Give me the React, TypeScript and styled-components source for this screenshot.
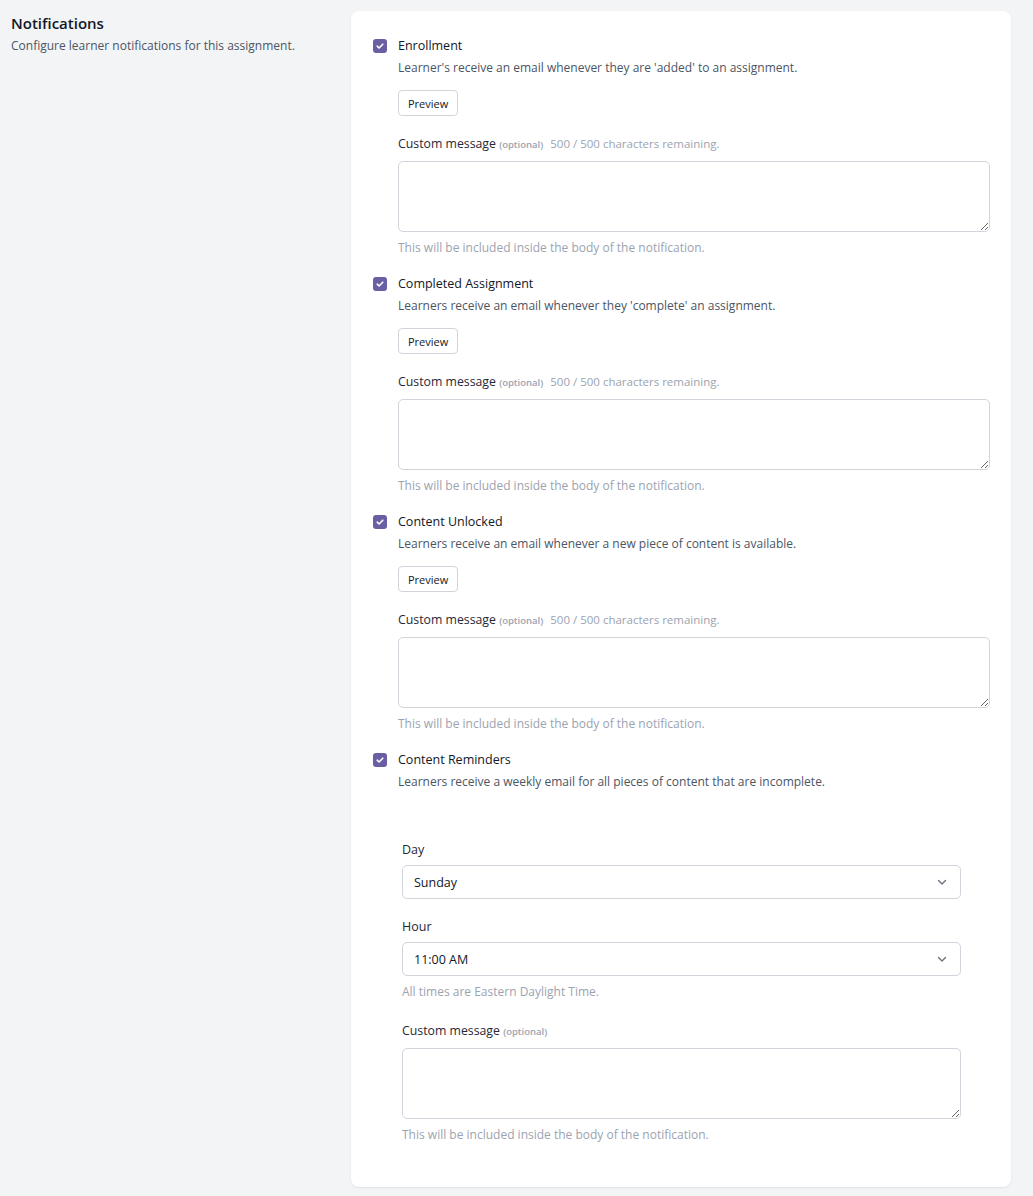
import styled, { createGlobalStyle } from 'styled-components';

const GlobalStyle = createGlobalStyle`
  body {
    margin: 0;
    background: #f3f4f6;
    font-family: "Open Sans", "Noto Sans", sans-serif;
    color: #1f2937;
  }
`;

const notifications = [
  {
    title: 'Enrollment',
    text: "Learner's receive an email whenever they are 'added' to an assignment.",
  },
  {
    title: 'Completed Assignment',
    text: "Learners receive an email whenever they 'complete' an assignment.",
  },
  {
    title: 'Content Unlocked',
    text: 'Learners receive an email whenever a new piece of content is available.',
  },
];

const Check = () => (
  <Box>
    <svg width="10" height="10" viewBox="0 0 10 10">
      <path d="M2.2 5.2 L4.1 7 L7.8 3.2" fill="none" stroke="#fff" strokeWidth="1.6" strokeLinecap="round" strokeLinejoin="round" />
    </svg>
  </Box>
);

const Chevron = () => (
  <svg width="12" height="12" viewBox="0 0 12 12">
    <path d="M2.5 4.5 L6 8 L9.5 4.5" fill="none" stroke="#6b7280" strokeWidth="1.4" strokeLinecap="round" strokeLinejoin="round" />
  </svg>
);

const App = () => {
  return (
    <>
      <GlobalStyle />
      <Page>
        <Intro>
          <Heading>Notifications</Heading>
          <Lead>Configure learner notifications for this assignment.</Lead>
        </Intro>
        <Card>
          {notifications.map((n) => (
            <Item key={n.title}>
              <Check />
              <Body>
                <Title>{n.title}</Title>
                <Desc>{n.text}</Desc>
                <PreviewButton>Preview</PreviewButton>
                <LabelRow>
                  <Label>
                    Custom message <Optional>(optional)</Optional>
                  </Label>
                  <Counter>500 / 500 characters remaining.</Counter>
                </LabelRow>
                <TextArea />
                <Hint>This will be included inside the body of the notification.</Hint>
              </Body>
            </Item>
          ))}
          <Item>
            <Check />
            <Body>
              <Title>Content Reminders</Title>
              <Desc>Learners receive a weekly email for all pieces of content that are incomplete.</Desc>
            </Body>
          </Item>
          <Schedule>
            <Field $top={0}>
              <FieldLabel>Day</FieldLabel>
              <Select>
                <span>Sunday</span>
                <Chevron />
              </Select>
            </Field>
            <Field $top={20}>
              <FieldLabel>Hour</FieldLabel>
              <Select>
                <span>11:00 AM</span>
                <Chevron />
              </Select>
              <Hint>All times are Eastern Daylight Time.</Hint>
            </Field>
            <Field $top={23}>
              <Label>
                Custom message <Optional>(optional)</Optional>
              </Label>
              <TextArea />
              <Hint>This will be included inside the body of the notification.</Hint>
            </Field>
          </Schedule>
        </Card>
      </Page>
    </>
  );
};

const Page = styled.div`
  display: grid;
  grid-template-columns: 340px 660px;
  padding: 11px 0 8px 11px;
`;

const Intro = styled.div`
  padding-top: 2px;
`;

const Heading = styled.h2`
  margin: 0;
  font-size: 15px;
  font-weight: 600;
  color: #111827;
  line-height: 20px;
`;

const Lead = styled.p`
  margin: 4px 0 0;
  font-size: 12px;
  color: #4b5563;
  line-height: 18px;
`;

const Card = styled.div`
  background: #fff;
  border-radius: 8px;
  box-shadow: 0 1px 2px rgba(0, 0, 0, 0.08);
  padding: 27px 21px 44px 22px;
`;

const Item = styled.div`
  display: flex;
  gap: 11px;
  margin-bottom: 20px;
`;

const Box = styled.div`
  flex: none;
  width: 14px;
  height: 14px;
  margin-top: 1px;
  border-radius: 3px;
  background: #6a5fa3;
  display: flex;
  align-items: center;
  justify-content: center;
`;

const Body = styled.div`
  flex: 1;
  display: flex;
  flex-direction: column;
  align-items: flex-start;
`;

const Title = styled.div`
  font-size: 12.5px;
  font-weight: 500;
  color: #111827;
  line-height: 16px;
`;

const Desc = styled.div`
  margin-top: 6px;
  font-size: 12px;
  color: #4b5563;
  line-height: 16px;
`;

const PreviewButton = styled.button`
  margin-top: 14px;
  height: 26px;
  padding: 0 9px;
  background: #fff;
  border: 1px solid #d1d5db;
  border-radius: 4px;
  font-family: inherit;
  font-size: 11px;
  color: #111827;
`;

const LabelRow = styled.div`
  margin-top: 20px;
  display: flex;
  align-items: baseline;
  gap: 7px;
`;

const Label = styled.div`
  font-size: 12.3px;
  font-weight: 500;
  color: #1f2937;
  line-height: 16px;
`;

const Optional = styled.span`
  font-size: 9.5px;
  font-weight: 600;
  color: #9ca3af;
`;

const Counter = styled.span`
  font-size: 11.5px;
  color: #9ca3af;
`;

const TextArea = styled.textarea`
  display: block;
  box-sizing: border-box;
  width: 100%;
  height: 71px;
  margin-top: 8px;
  border: 1px solid #d1d5db;
  border-radius: 5px;
  font-family: inherit;
`;

const Hint = styled.div`
  margin-top: 8px;
  font-size: 12px;
  color: #9ca3af;
  line-height: 16px;
`;

const Schedule = styled.div`
  margin: 52px 29px 0 29px;
  display: flex;
  flex-direction: column;
`;

const Field = styled.div<{ $top: number }>`
  display: flex;
  flex-direction: column;
  margin-top: ${(p) => p.$top}px;
`;

const FieldLabel = styled.div`
  font-size: 12.5px;
  color: #1f2937;
  line-height: 16px;
  margin-bottom: 7px;
`;

const Select = styled.div`
  box-sizing: border-box;
  height: 34px;
  display: flex;
  align-items: center;
  justify-content: space-between;
  padding: 0 12px 0 11px;
  border: 1px solid #d1d5db;
  border-radius: 5px;
  font-size: 12.5px;
  color: #111827;
`;

export default App;
